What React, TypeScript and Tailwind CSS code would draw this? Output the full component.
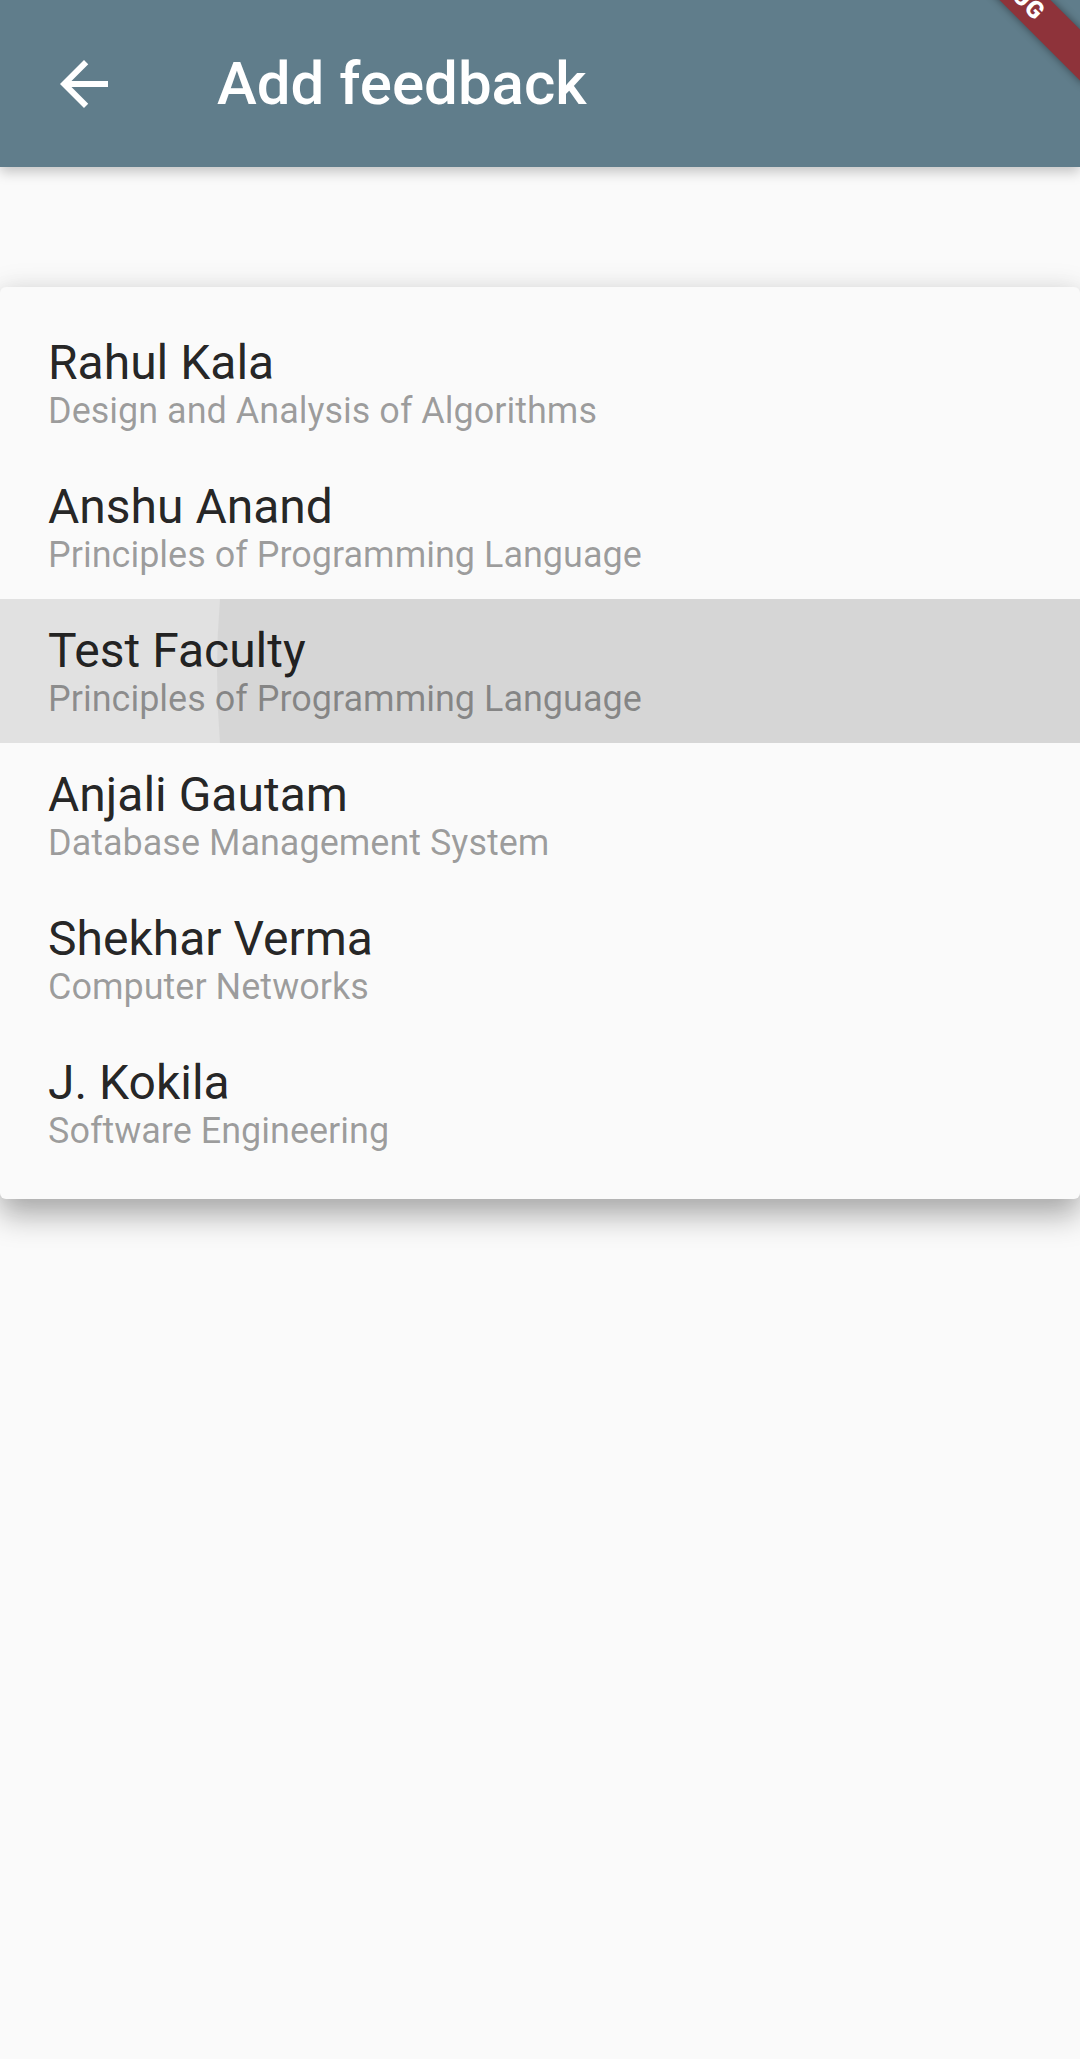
import React from 'react';

const faculty = [
  { name: 'Rahul Kala', course: 'Design and Analysis of Algorithms' },
  { name: 'Anshu Anand', course: 'Principles of Programming Language' },
  { name: 'Test Faculty', course: 'Principles of Programming Language', pressed: true },
  { name: 'Anjali Gautam', course: 'Database Management System' },
  { name: 'Shekhar Verma', course: 'Computer Networks' },
  { name: 'J. Kokila', course: 'Software Engineering' },
];

const BackArrow = () => (
  <svg viewBox="0 0 24 24" className="w-[72px] h-[72px]" fill="#ffffff">
    <path d="M20 11H7.83l5.59-5.59L12 4l-8 8 8 8 1.41-1.41L7.83 13H20v-2z" />
  </svg>
);

const App = () => {
  return (
    <div
      className="relative w-[1080px] min-h-[2059px] overflow-hidden bg-[#fafafa]"
      style={{ fontFamily: 'Roboto, "Noto Sans", sans-serif' }}
    >
      {/* app bar */}
      <header className="relative z-10 h-[167px] bg-[#607d8b] flex items-center pl-[48px] shadow-[0_5px_12px_rgba(0,0,0,0.22)]">
        <BackArrow />
        <h1 className="ml-[97px] text-[60px] leading-[60px] font-medium text-white">Add feedback</h1>
        <div className="absolute left-[892px] top-[-31px] w-[240px] h-[36px] rotate-45 bg-[#8e333a] flex items-center justify-center shadow-[0_0_8px_rgba(0,0,0,0.45)]">
          <span className="text-white text-[24px] leading-[24px] font-black tracking-[1px]">DEBUG</span>
        </div>
      </header>

      {/* faculty list */}
      <div className="mt-[120px] rounded-[6px] bg-[#fafafa] py-[24px] shadow-[0_18px_30px_rgba(0,0,0,0.28),0_0_28px_rgba(0,0,0,0.1)]">
        {faculty.map((f) => (
          <div
            key={f.name}
            className={
              f.pressed
                ? 'relative h-[144px] px-[48px] flex flex-col justify-center overflow-hidden bg-[#e1e1e1]'
                : 'relative h-[144px] px-[48px] flex flex-col justify-center'
            }
          >
            {f.pressed && (
              <div className="absolute left-[217px] top-[-792px] w-[1728px] h-[1728px] rounded-full bg-[#d6d6d6]" />
            )}
            <div className="relative text-[48px] leading-[56px] text-[rgba(0,0,0,0.87)]">{f.name}</div>
            <div className="relative text-[36px] leading-[40px] text-[rgba(0,0,0,0.38)]">{f.course}</div>
          </div>
        ))}
      </div>
    </div>
  );
};

export default App;
